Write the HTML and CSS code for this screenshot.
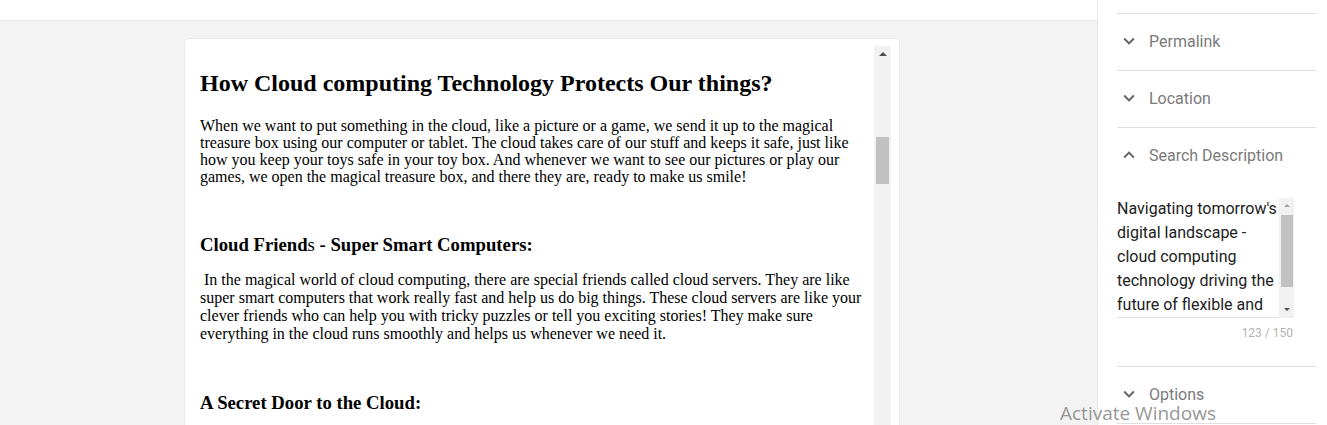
FILE: index.html
```html
<!DOCTYPE html>
<html lang="en">
<head>
<meta charset="utf-8">
<title>Post editor</title>
<link rel="stylesheet" href="styles.css">
</head>
<body>
<div class="app">
  <div class="main">
    <header class="topbar"></header>
    <div class="canvas">
      <div class="card">
        <article class="doc">
          <h2 class="doc-title">How Cloud computing Technology Protects Our things?</h2>
          <p class="para para-a">When we want to put something in the cloud, like a picture or a game, we send it up to the magical treasure box using our computer or tablet. The cloud takes care of our stuff and keeps it safe, just like how you keep your toys safe in your toy box. And whenever we want to see our pictures or play our games, we open the magical treasure box, and there they are, ready to make us smile!</p>
          <h3 class="doc-sub sub-a">Cloud Friend<span class="thin">s</span> - Super Smart Computers:</h3>
          <p class="para para-b">&nbsp;In the magical world of cloud computing, there are special friends called cloud servers. They are like super smart computers that work really fast and help us do big things. These cloud servers are like your clever friends who can help you with tricky puzzles or tell you exciting stories! They make sure everything in the cloud runs smoothly and helps us whenever we need it.</p>
          <h3 class="doc-sub sub-b">A Secret Door to the Cloud:</h3>
        </article>
        <div class="vscroll">
          <span class="arrow-up"></span>
          <div class="vthumb"></div>
        </div>
      </div>
    </div>
  </div>
  <aside class="sidebar">
    <section class="panel">
      <div class="panel-head">
        <svg class="chev" viewBox="0 0 24 24"><path d="M16.59 8.59L12 13.17 7.41 8.59 6 10l6 6 6-6z"/></svg>
        <span class="panel-label">Permalink</span>
      </div>
    </section>
    <section class="panel">
      <div class="panel-head">
        <svg class="chev" viewBox="0 0 24 24"><path d="M16.59 8.59L12 13.17 7.41 8.59 6 10l6 6 6-6z"/></svg>
        <span class="panel-label">Location</span>
      </div>
    </section>
    <section class="panel">
      <div class="panel-head">
        <svg class="chev" viewBox="0 0 24 24"><path d="M12 8l-6 6 1.41 1.41L12 10.83l4.59 4.58L18 14z"/></svg>
        <span class="panel-label">Search Description</span>
      </div>
      <div class="panel-body">
        <div class="ta">
          <div class="ta-text">Navigating tomorrow's digital landscape - cloud computing technology driving the future of flexible and</div>
          <div class="ta-scroll">
            <span class="ta-up"></span>
            <div class="ta-thumb"></div>
            <span class="ta-down"></span>
          </div>
        </div>
        <div class="counter">123 / 150</div>
      </div>
    </section>
    <section class="panel">
      <div class="panel-head">
        <svg class="chev" viewBox="0 0 24 24"><path d="M16.59 8.59L12 13.17 7.41 8.59 6 10l6 6 6-6z"/></svg>
        <span class="panel-label">Options</span>
      </div>
    </section>
    <section class="panel"></section>
  </aside>
  <div class="watermark">Activate Windows</div>
</div>
</body>
</html>
```

FILE: styles.css
```css
* { box-sizing: border-box; }
html, body { margin: 0; padding: 0; height: 425px; overflow: hidden; background: #fff; }
body { font-family: Roboto, "Noto Sans", sans-serif; }

.app { display: flex; height: 425px; position: relative; }

.main { width: 1097px; display: flex; flex-direction: column; flex: none; }
.topbar { height: 21px; background: #fff; border-bottom: 1px solid #e6e6e6; flex: none; }
.canvas { flex: 1; background: #f3f3f3; padding: 17px 0 0 184px; overflow: hidden; }

.card {
  width: 716px; height: 420px; background: #fff;
  border: 1px solid #ebebeb; border-radius: 4px;
  display: flex; padding: 7px 8px 0 0;
}
.doc { flex: 1; padding-left: 15px; font-family: "Liberation Serif", "Times New Roman", serif; color: #000; }
.doc-title { margin: 23px 0 0; font-size: 24px; line-height: 28px; font-weight: bold; }
.para { margin: 0; font-size: 16px; }
.para-a { margin-top: 20px; line-height: 17px; }
.para-b { margin-top: 16px; line-height: 18px; }
.doc-sub { margin: 0; font-size: 18.72px; line-height: 21px; font-weight: bold; }
.doc-sub .thin { font-weight: normal; }
.sub-a { margin-top: 49px; }
.sub-b { margin-top: 49px; }

.vscroll { width: 17px; flex: none; background: #f1f1f1; display: flex; flex-direction: column; align-items: center; }
.arrow-up { margin-top: 6px; width: 0; height: 0; border-left: 4px solid transparent; border-right: 4px solid transparent; border-bottom: 4px solid #505050; }
.vthumb { margin-top: 81px; width: 13px; height: 47px; background: #c1c1c1; }

.sidebar { width: 230px; flex: none; border-left: 1px solid #e8e8e8; padding: 13px 11px 0 19px; background: #fff; }
.panel { border-top: 1px solid #e0e0e0; }
.panel-head { height: 56px; display: flex; align-items: center; padding-bottom: 2px; }
.chev { width: 22px; height: 22px; fill: #5f6368; margin-left: 1px; flex: none; }
.panel-label { margin-left: 9px; font-size: 16px; color: #7a7a7a; }

.panel-body { padding-top: 13px; padding-bottom: 25px; }
.ta { width: 177px; height: 121px; display: flex; border-bottom: 1px solid #e3e3e3; }
.ta-text { flex: 1; height: 120px; overflow: hidden; font-size: 16px; line-height: 24px; color: #212121; }
.ta-scroll { width: 15px; flex: none; height: 120px; margin-top: 1px; background: #f1f1f1; display: flex; flex-direction: column; align-items: center; }
.ta-up { margin-top: 6px; width: 0; height: 0; border-left: 3px solid transparent; border-right: 3px solid transparent; border-bottom: 3px solid #a3a3a3; }
.ta-thumb { margin-top: 8px; width: 12px; height: 72px; background: #c1c1c1; }
.ta-down { margin-top: 21px; width: 0; height: 0; border-left: 3px solid transparent; border-right: 3px solid transparent; border-top: 3px solid #505050; }
.counter { margin-top: 7px; padding-right: 1px; text-align: right; width: 177px; font-size: 12px; line-height: 16px; color: #b3b3b3; }

.watermark {
  position: absolute; left: 1060px; top: 401px;
  font-family: "Open Sans", "Noto Sans", sans-serif; font-size: 19px; line-height: 24px;
  color: rgba(130, 130, 130, 0.85); pointer-events: none;
}
```
